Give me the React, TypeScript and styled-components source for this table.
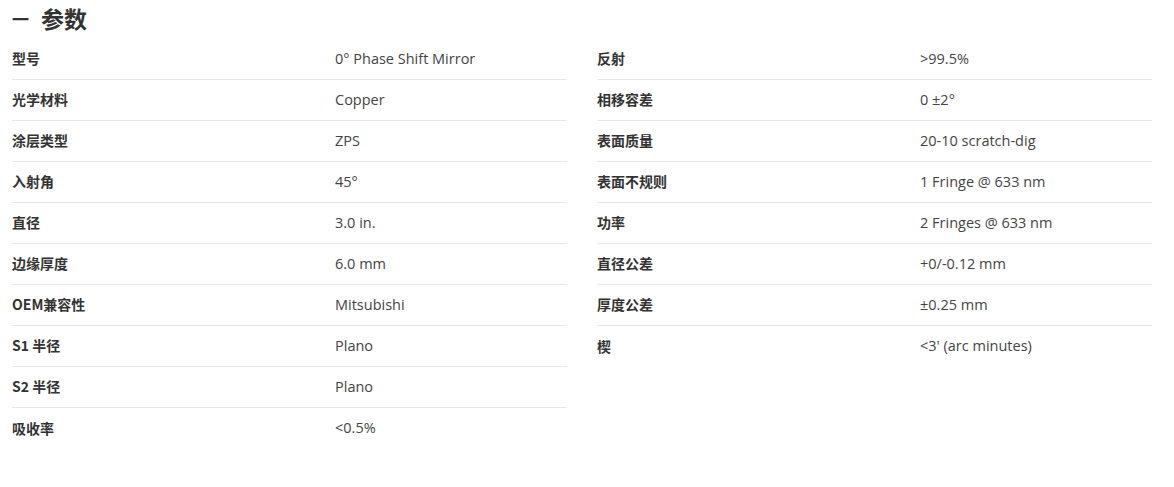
import React from "react";
import styled, { createGlobalStyle } from "styled-components";

const Global = createGlobalStyle`
  html, body { margin: 0; padding: 0; background: #fff; }
  body { font-family: "Open Sans", "Noto Sans CJK SC", sans-serif; color: #333; }
`;

const Page = styled.div`
  padding: 0 22px 0 12px;
`;

const Title = styled.h2`
  margin: 0;
  height: 39px;
  display: flex;
  align-items: center;
  gap: 12px;
  font-family: "Noto Sans CJK SC", sans-serif;
  font-size: 23px;
  font-weight: 700;
  color: #333;
  padding-bottom: 3px;
  box-sizing: border-box;
`;

const Dash = styled.span`
  font-size: 17px;
`;

const Columns = styled.div`
  display: grid;
  grid-template-columns: 555px 555px;
  column-gap: 30px;
  align-items: start;
`;

const List = styled.div`
  display: flex;
  flex-direction: column;
`;

const Row = styled.div`
  display: grid;
  grid-template-columns: 323px 1fr;
  align-items: center;
  height: 41px;
  padding-bottom: 2px;
  box-sizing: border-box;
  border-bottom: 1px solid #e8e8e8;
  &:last-child { border-bottom: none; }
`;

const Label = styled.div`
  font-family: "Noto Sans CJK SC", "Open Sans", sans-serif;
  font-size: 14px;
  font-weight: 700;
  color: #333;
`;

const Value = styled.div`
  font-family: "Open Sans", "Noto Sans CJK SC", sans-serif;
  font-size: 14.5px;
  color: #444;
`;

const left: [string, string][] = [
  ["型号", "0° Phase Shift Mirror"],
  ["光学材料", "Copper"],
  ["涂层类型", "ZPS"],
  ["入射角", "45°"],
  ["直径", "3.0 in."],
  ["边缘厚度", "6.0 mm"],
  ["OEM兼容性", "Mitsubishi"],
  ["S1 半径", "Plano"],
  ["S2 半径", "Plano"],
  ["吸收率", "<0.5%"],
];

const right: [string, string][] = [
  ["反射", ">99.5%"],
  ["相移容差", "0 ±2°"],
  ["表面质量", "20-10 scratch-dig"],
  ["表面不规则", "1 Fringe @ 633 nm"],
  ["功率", "2 Fringes @ 633 nm"],
  ["直径公差", "+0/-0.12 mm"],
  ["厚度公差", "±0.25 mm"],
  ["楔", "<3' (arc minutes)"],
];

const SpecList = ({ items }: { items: [string, string][] }) => (
  <List>
    {items.map(([k, v]) => (
      <Row key={k}>
        <Label>{k}</Label>
        <Value>{v}</Value>
      </Row>
    ))}
  </List>
);

export default function App() {
  return (
    <Page>
      <Global />
      <Title>
        <Dash>一</Dash>
        <span>参数</span>
      </Title>
      <Columns>
        <SpecList items={left} />
        <SpecList items={right} />
      </Columns>
    </Page>
  );
}
